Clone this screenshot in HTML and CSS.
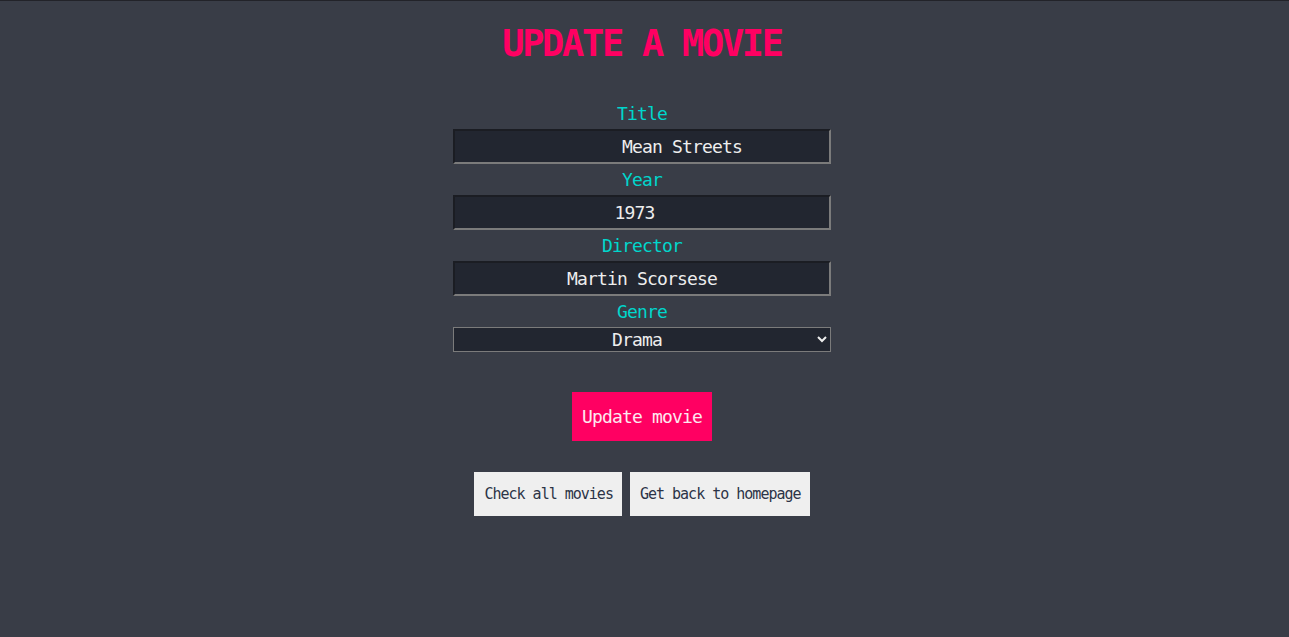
FILE: index.html
```html
<!DOCTYPE html>
<html lang="en">
<head>
<meta charset="utf-8">
<title>Update a movie</title>
<link rel="stylesheet" href="styles.css">
</head>
<body>
<main class="page">
  <h1 class="heading">UPDATE A MOVIE</h1>
  <form class="form">
    <label class="label" for="title">Title</label>
    <input class="field field-title" id="title" type="text" value="Mean Streets">
    <label class="label" for="year">Year</label>
    <input class="field field-year" id="year" type="text" value="1973">
    <label class="label" for="director">Director</label>
    <input class="field" id="director" type="text" value="Martin Scorsese">
    <label class="label" for="genre">Genre</label>
    <select class="select" id="genre">
      <option>Drama</option>
      <option>Comedy</option>
      <option>Action</option>
    </select>
    <button class="submit" type="button">Update movie</button>
  </form>
  <div class="links">
    <button class="link-btn" type="button">Check all movies</button>
    <button class="link-btn" type="button">Get back to homepage</button>
  </div>
</main>
</body>
</html>
```
FILE: styles.css
```css
html, body {
  margin: 0;
  padding: 0;
  background: #393d47;
}
body {
  border-top: 1px solid #222329;
  min-height: 636px;
  font-family: "DejaVu Sans Mono", "Liberation Mono", monospace;
}
.page {
  display: flex;
  flex-direction: column;
  align-items: center;
  padding-right: 5px;
}
.heading {
  margin: 23px 0 34px;
  font-size: 37px;
  line-height: 40px;
  letter-spacing: -2.3px;
  font-weight: bold;
  color: #ff0062;
}
.form {
  width: 378px;
  display: flex;
  flex-direction: column;
  align-items: stretch;
}
.label {
  display: block;
  text-align: center;
  font-size: 18px;
  line-height: 31px;
  letter-spacing: -0.84px;
  color: #00d6cc;
}
.field {
  box-sizing: border-box;
  height: 35px;
  margin: 0;
  padding: 0 2px;
  background: #222630;
  color: #eeeeee;
  font-family: inherit;
  font-size: 18px;
  letter-spacing: -0.84px;
  text-align: center;
  border: 2px solid;
  border-color: #1b1d23 #7b7b7b #7b7b7b #1b1d23;
  outline: none;
}
.field-title {
  padding-left: 82px;
}
.field-year {
  padding-right: 17px;
}
.select {
  box-sizing: border-box;
  height: 25px;
  margin: 0;
  background: #222630;
  color: #eeeeee;
  border: 1px solid #7b7b7b;
  border-radius: 0;
  font-family: inherit;
  font-size: 18px;
  letter-spacing: -0.84px;
  text-align: center;
  text-align-last: center;
  padding: 0 0 0 2px;
}
.submit {
  align-self: center;
  margin-top: 40px;
  width: 140px;
  height: 49px;
  padding: 0 10px;
  border: none;
  background: #ff0062;
  color: #fde8ef;
  font-family: inherit;
  font-size: 18px;
  letter-spacing: -0.84px;
}
.links {
  margin-top: 31px;
  display: flex;
  gap: 8px;
}
.link-btn {
  height: 44px;
  padding: 0 9px 0 10px;
  border: none;
  background: #efefef;
  color: #2c3447;
  font-family: inherit;
  font-size: 15px;
  letter-spacing: -1px;
}
```
